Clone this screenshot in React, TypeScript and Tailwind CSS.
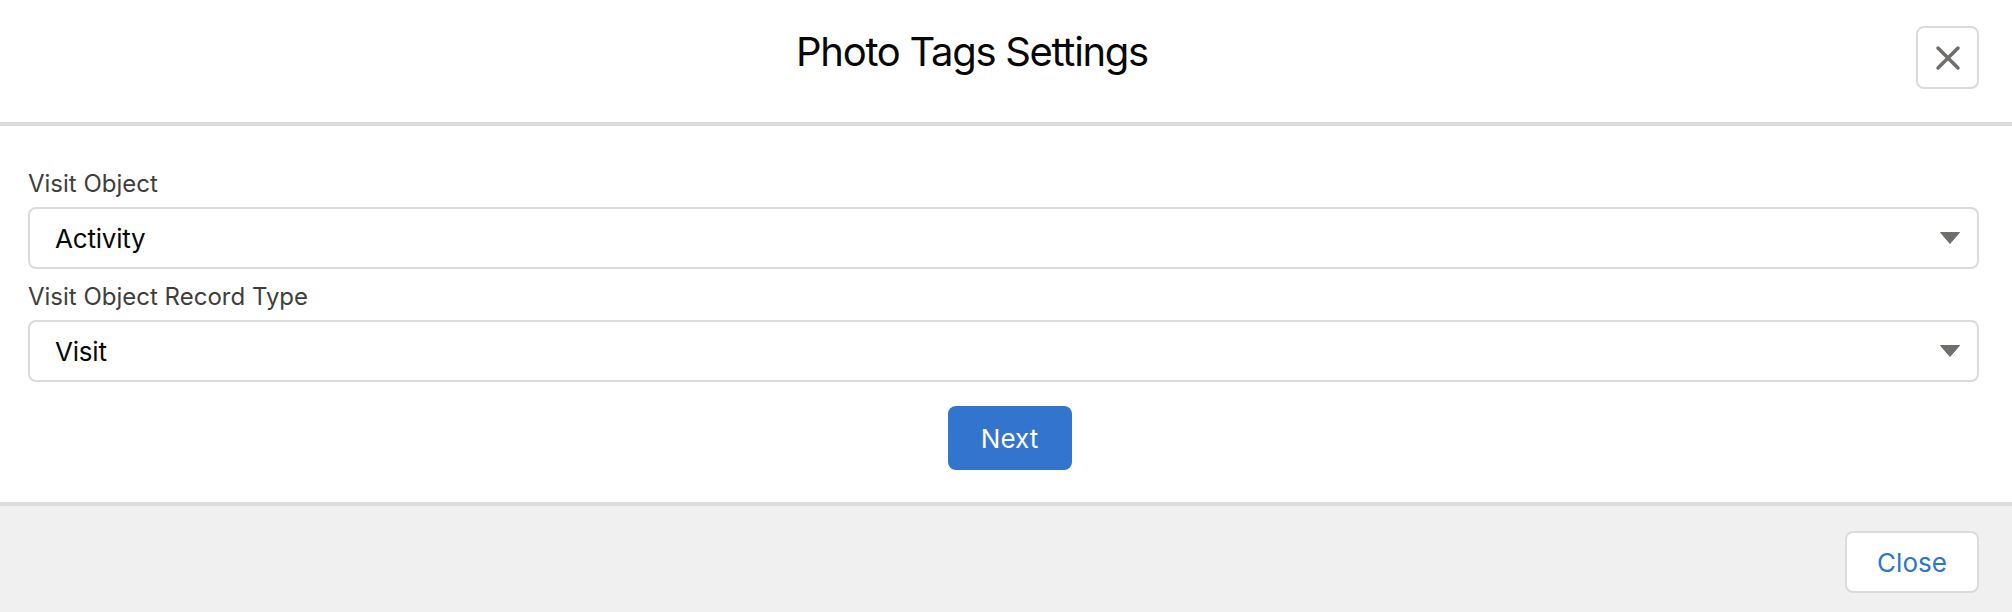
import { X } from "lucide-react";

const font = { fontFamily: "Inter, 'Noto Sans', sans-serif" };

function SelectField({ label, value, className }: { label: string; value: string; className?: string }) {
  return (
    <div className={className}>
      <label className="block text-[24px] leading-[36px] text-[#3e3e3c]">{label}</label>
      <div className="mt-[5px] flex h-[62px] items-center justify-between rounded-[8px] border-2 border-[#dddbda] bg-white pl-[25px] pr-[17px]">
        <span className="pt-[2px] text-[26px] leading-[36px] tracking-[-0.2px] text-[#080707]">{value}</span>
        <svg width="20" height="12" viewBox="0 0 20 12" className="text-[#706e6b]" aria-hidden>
          <path d="M0.5 0.5h19L10 11.5z" fill="currentColor" strokeLinejoin="round" stroke="currentColor" strokeWidth="1" />
        </svg>
      </div>
    </div>
  );
}

export default function App() {
  return (
    <div className="min-h-[612px] w-full bg-white" style={font}>
      <header className="flex h-[126px] items-start border-b-4 border-[#dddbda] pl-[28px] pr-[33px] pt-[26px]">
        <h1 className="mt-[2px] flex-1 text-center text-[40px] font-normal leading-[48px] tracking-[-1.3px] text-[#080707]">
          Photo Tags Settings
        </h1>
        <button className="flex h-[63px] w-[63px] items-center justify-center rounded-[8px] border-2 border-[#dddbda] bg-white text-[#706e6b]">
          <X className="h-[40px] w-[40px]" strokeWidth={2.1} />
        </button>
      </header>

      <section className="border-b-4 border-[#dddbda] pb-[32px] pl-[28px] pr-[33px] pt-[40px]">
        <SelectField label="Visit Object" value="Activity" />
        <SelectField label="Visit Object Record Type" value="Visit" className="mt-[10px]" />
        <div className="mt-[24px] flex justify-center pl-[12px]">
          <button className="h-[64px] w-[124px] rounded-[8px] bg-[#3274ce] text-[26px] text-white">Next</button>
        </div>
      </section>

      <footer className="flex h-[106px] justify-end bg-[#f0f0f0] pr-[33px] pt-[25px]">
        <button className="h-[62px] w-[134px] rounded-[8px] border-2 border-[#dddbda] bg-white text-[26px] text-[#2e74d2]">
          Close
        </button>
      </footer>
    </div>
  );
}
